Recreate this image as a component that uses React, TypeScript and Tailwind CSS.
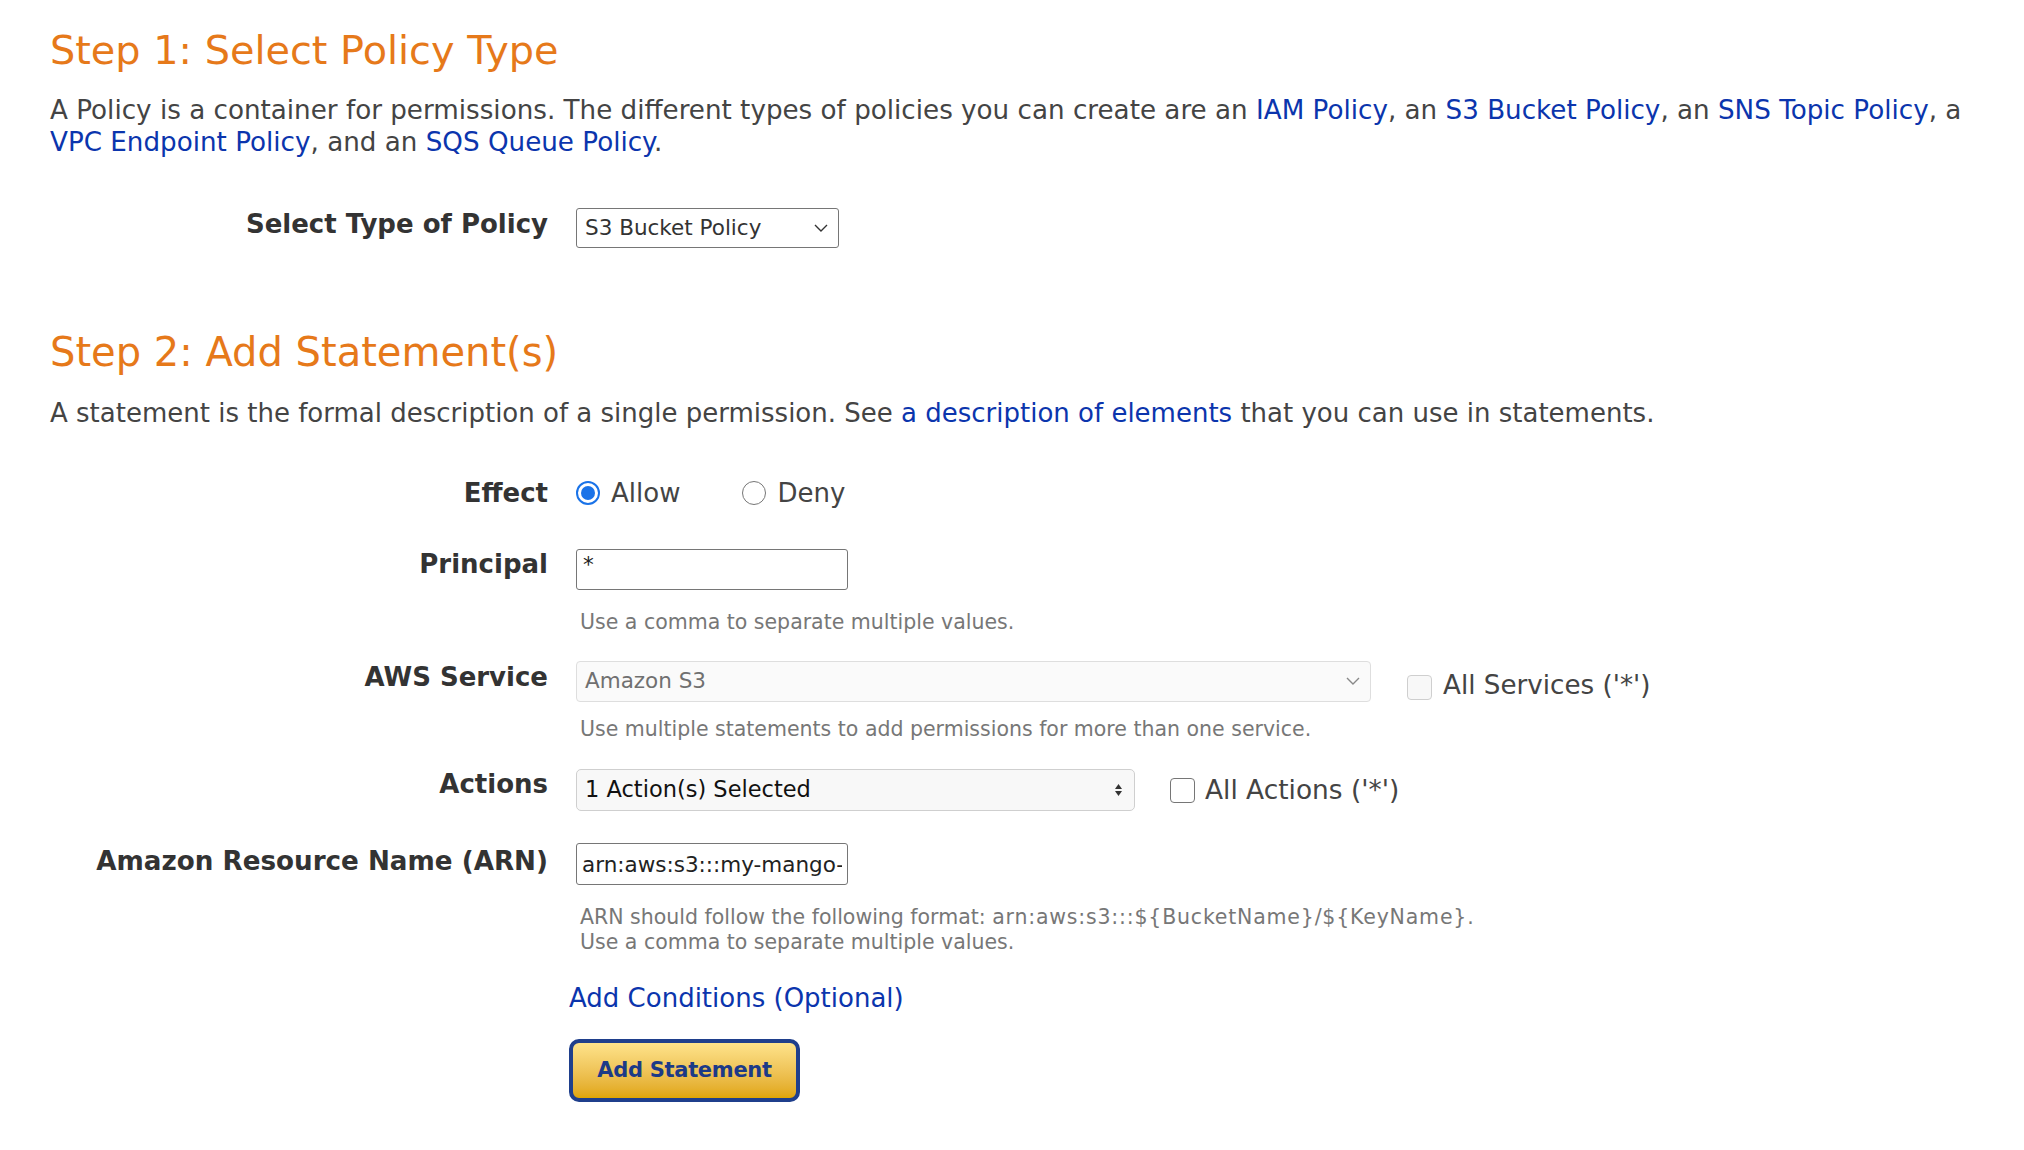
import { useState } from "react";

const font = "font-['DejaVu_Sans','Liberation_Sans',sans-serif]";

function Radio({ checked }: { checked: boolean }) {
    return checked ? (
        <span className="w-[24px] h-[24px] rounded-full border-[2px] border-[#1a73e8] flex items-center justify-center bg-white shrink-0">
            <span className="w-[14px] h-[14px] rounded-full bg-[#1a73e8]"></span>
        </span>
    ) : (
        <span className="w-[24px] h-[24px] rounded-full border-[1.5px] border-[#767676] bg-white shrink-0"></span>
    );
}

function Chevron() {
    return (
        <svg width="14" height="8" viewBox="0 0 14 8" fill="none">
            <path d="M1 1l6 6 6-6" stroke="currentColor" strokeWidth="1.4" />
        </svg>
    );
}

export default function App() {
    const [effect, setEffect] = useState("Allow");

    return (
        <div className={`${font} min-h-[1150px] w-[2024px] bg-white pl-[50px] pt-[27px] text-[#444]`}>
            {/* Step 1 */}
            <h1 className="text-[39.8px] leading-[46px] text-[#e6791a] font-normal">Step 1: Select Policy Type</h1>
            <p className="mt-[21px] text-[26.2px] leading-[32px]">
                A Policy is a container for permissions. The different types of policies you can create are an{" "}
                <a className="text-[#0b35ad]">IAM Policy</a>, an <a className="text-[#0b35ad]">S3 Bucket Policy</a>, an{" "}
                <a className="text-[#0b35ad]">SNS Topic Policy</a>, a
                <br />
                <a className="text-[#0b35ad]">VPC Endpoint Policy</a>, and an <a className="text-[#0b35ad]">SQS Queue Policy</a>.
            </p>

            <div className="mt-[50px] flex items-start gap-[28px]">
                <label className="w-[498px] text-right font-bold text-[26px] leading-[32px] text-[#333]">Select Type of Policy</label>
                <div className="relative w-[263px] h-[40px] border-[1.5px] border-[#767676] rounded-[3px] bg-white flex items-center pl-[8px] text-[21.5px] text-[#333]">
                    S3 Bucket Policy
                    <span className="absolute right-[10px] top-[15px] text-[#333]"><Chevron /></span>
                </div>
            </div>

            {/* Step 2 */}
            <h1 className="mt-[81px] text-[40px] leading-[46px] text-[#e6791a] font-normal">Step 2: Add Statement(s)</h1>
            <p className="mt-[22px] text-[26px] leading-[32px]">
                A statement is the formal description of a single permission. See{" "}
                <a className="text-[#0b35ad]">a description of elements</a> that you can use in statements.
            </p>

            {/* Effect */}
            <div className="mt-[48px] flex items-center gap-[28px]">
                <label className="w-[498px] text-right font-bold text-[26px] leading-[32px] text-[#333]">Effect</label>
                <div className="flex items-center text-[26px] leading-[32px]">
                    <button onClick={() => setEffect("Allow")} className="flex items-center gap-[11px]">
                        <Radio checked={effect === "Allow"} />
                        <span>Allow</span>
                    </button>
                    <button onClick={() => setEffect("Deny")} className="ml-[62px] flex items-center gap-[11px]">
                        <Radio checked={effect === "Deny"} />
                        <span>Deny</span>
                    </button>
                </div>
            </div>

            {/* Principal */}
            <div className="mt-[39px] flex items-start gap-[28px]">
                <label className="w-[498px] text-right font-bold text-[26px] leading-[32px] text-[#333]">Principal</label>
                <div>
                    <input
                        defaultValue="*"
                        className="mt-[1px] w-[272px] h-[41px] border-[1.5px] border-[#767676] rounded-[3px] px-[6px] pb-[10px] text-[21.5px] text-[#222] outline-none"
                    />
                    <div className="mt-[20px] ml-[4px] text-[20.5px] leading-[25px] text-[#777]">Use a comma to separate multiple values.</div>
                </div>
            </div>

            {/* AWS Service */}
            <div className="mt-[26px] flex items-start gap-[28px]">
                <label className="w-[498px] text-right font-bold text-[26px] leading-[32px] text-[#333]">AWS Service</label>
                <div>
                    <div className="flex items-center">
                        <div className="relative w-[795px] h-[41px] border-[1.5px] border-[#dedede] rounded-[4px] bg-[#fafafa] flex items-center pl-[8px] text-[21.5px] text-[#707070]">
                            Amazon S3
                            <span className="absolute right-[10px] top-[15px] text-[#888]"><Chevron /></span>
                        </div>
                        <span className="ml-[36px] w-[25px] h-[25px] mt-[12px] rounded-[4px] border-[1.5px] border-[#cfcfcf] bg-[#f8f8f8]"></span>
                        <span className="ml-[11px] mt-[6px] text-[26.2px] leading-[32px] text-[#444]">All Services ('*')</span>
                    </div>
                    <div className="mt-[15px] ml-[4px] text-[20.5px] leading-[25px] text-[#777]">
                        Use multiple statements to add permissions for more than one service.
                    </div>
                </div>
            </div>

            {/* Actions */}
            <div className="mt-[26px] flex items-start gap-[28px]">
                <label className="w-[498px] text-right font-bold text-[26px] leading-[32px] text-[#333]">Actions</label>
                <div className="flex items-center mt-[1px]">
                    <div className="relative w-[559px] h-[42px] border-[1.5px] border-[#cfcfcf] rounded-[5px] bg-[#f8f8f8] flex items-center pl-[8px] text-[22.5px] text-[#111]">
                        1 Action(s) Selected
                        <svg className="absolute right-[11px] top-[12px]" width="9" height="16" viewBox="0 0 9 16">
                            <path d="M4.5 2L8 7H1z" fill="#333" />
                            <path d="M4.5 14L8 9H1z" fill="#333" />
                        </svg>
                    </div>
                    <span className="ml-[35px] w-[25px] h-[25px] rounded-[4px] border-[1.5px] border-[#767676] bg-white"></span>
                    <span className="ml-[10px] text-[26.4px] leading-[32px] text-[#444]">All Actions ('*')</span>
                </div>
            </div>

            {/* ARN */}
            <div className="mt-[32px] flex items-start gap-[28px]">
                <label className="mt-[2px] w-[498px] text-right font-bold text-[26.2px] leading-[32px] text-[#333]">Amazon Resource Name (ARN)</label>
                <div>
                    <input
                        defaultValue="arn:aws:s3:::my-mango-bucket/*"
                        className="w-[272px] h-[42px] border-[1.5px] border-[#767676] rounded-[3px] px-[5px] text-[21.5px] text-[#222] outline-none"
                    />
                    <div className="mt-[20px] ml-[4px] text-[20.5px] leading-[25px] text-[#777]">
                        ARN should follow the following format:{" "}
                        <span className="tracking-[0.8px]">arn:aws:s3:::${"{"}BucketName{"}"}/${"{"}KeyName{"}"}.</span>
                        <br />
                        Use a comma to separate multiple values.
                    </div>
                    <a className="block mt-[27px] -ml-[7px] text-[26px] leading-[32px] text-[#0b35ad]">Add Conditions (Optional)</a>
                    <button className="mt-[25px] -ml-[7px] w-[231px] h-[63px] rounded-[10px] border-[4px] border-[#1f3f8c] bg-gradient-to-b from-[#fee38a] to-[#e0a600] font-bold text-[21px] text-[#1c3a87] tracking-[-0.3px]">
                        Add Statement
                    </button>
                </div>
            </div>
        </div>
    );
}
